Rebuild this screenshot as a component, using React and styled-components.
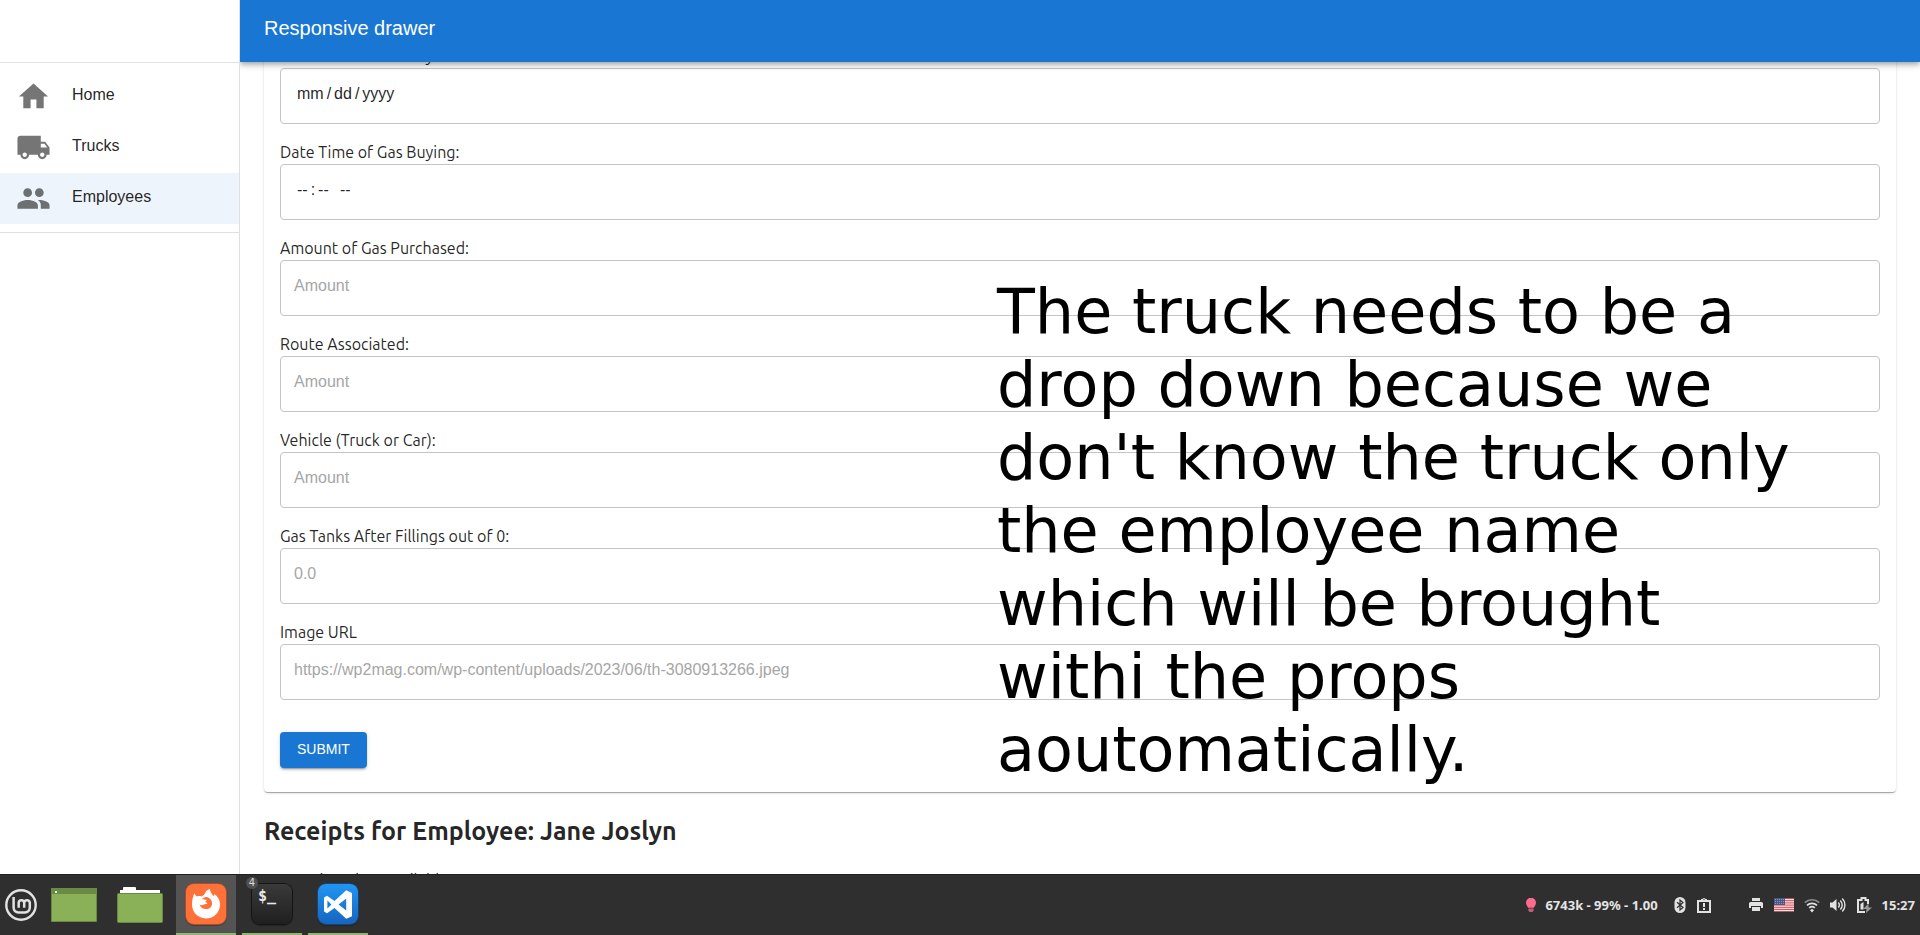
import React from "react";
import styled, { createGlobalStyle } from "styled-components";
import { MdHome, MdLocalShipping, MdPeople } from "react-icons/md";

const GlobalStyle = createGlobalStyle`
  *, *::before, *::after { box-sizing: border-box; }
  body {
    margin: 0;
    background: #fff;
    color: rgba(0, 0, 0, 0.87);
    font: 16px/24px "Liberation Sans", Arial, sans-serif;
  }
`;

const humanist = `"Ubuntu", "Open Sans", "Noto Sans", sans-serif`;

const Screen = styled.div`
  height: 100vh;
  display: grid;
  grid-template-rows: minmax(0, 1fr) 61px;
`;

const Page = styled.div`
  display: grid;
  grid-template-columns: 240px minmax(0, 1fr);
  min-height: 0;
  overflow: hidden;
`;

const Drawer = styled.nav`
  position: relative;
  z-index: 3;
  background: #fff;
  border-right: 1px solid #e0e0e0;
`;

const DrawerHeader = styled.div`
  height: 63px;
  border-bottom: 1px solid #e0e0e0;
`;

const NavList = styled.ul`
  list-style: none;
  margin: 0;
  padding: 8px 0;
  border-bottom: 1px solid #e0e0e0;
`;

const NavLink = styled.a`
  display: flex;
  align-items: center;
  gap: 21px;
  height: 51px;
  padding: 0 16px;
  color: inherit;
  text-decoration: none;
  background: ${(p) => (p.$selected ? "rgba(25, 118, 210, 0.08)" : "transparent")};

  svg { width: 35px; height: 35px; color: rgba(0, 0, 0, 0.54); }
  span { padding-bottom: 4px; }
`;

const Workspace = styled.div`
  position: relative;
  min-height: 0;
  overflow: hidden;
`;

const AppBar = styled.header`
  position: absolute;
  z-index: 2;
  top: 0;
  left: 0;
  right: 0;
  height: 62px;
  display: flex;
  align-items: center;
  padding: 0 24px 6px;
  color: #fff;
  background: #1976d2;
  box-shadow: 0 2px 4px -1px rgba(0, 0, 0, 0.2), 0 4px 5px 0 rgba(0, 0, 0, 0.14),
    0 1px 10px 0 rgba(0, 0, 0, 0.12);
`;

const AppTitle = styled.h1`
  margin: 0;
  font-size: 20px;
  font-weight: 400;
`;

const Main = styled.main`
  padding: 28px 24px 24px;
`;

const Card = styled.form`
  display: flex;
  flex-direction: column;
  align-items: stretch;
  gap: 16px;
  padding: 16px 16px 24px;
  border-radius: 4px;
  background: #fff;
  box-shadow: 0 2px 1px -1px rgba(0, 0, 0, 0.2), 0 1px 1px 0 rgba(0, 0, 0, 0.14),
    0 1px 3px 0 rgba(0, 0, 0, 0.12);
`;

const Field = styled.div`
  display: flex;
  flex-direction: column;
`;

const Label = styled.label`
  font-family: ${humanist};
`;

const TextInput = styled.input`
  width: 100%;
  height: 56px;
  padding: 0 13px 5px;
  border: 1px solid #c4c4c4;
  border-radius: 4px;
  background: transparent;
  color: rgba(0, 0, 0, 0.87);
  font: 16px "Liberation Sans", Arial, sans-serif;

  &::placeholder { color: #a6a6a6; opacity: 1; }
`;

const PickerInput = styled(TextInput)`
  padding-left: 15px;

  &::-webkit-datetime-edit-text { padding: 0 2px; }
  &::-webkit-datetime-edit-ampm-field { margin-left: 2px; }
  &::-webkit-calendar-picker-indicator { display: none; }
`;

const Submit = styled.button`
  align-self: flex-start;
  height: 36px;
  margin-top: 16px;
  padding: 0 17px 2px;
  border: 0;
  border-radius: 4px;
  color: #fff;
  background: #1976d2;
  font: 14px "Liberation Sans", Arial, sans-serif;
  text-transform: uppercase;
  box-shadow: 0 3px 1px -2px rgba(0, 0, 0, 0.2), 0 2px 2px 0 rgba(0, 0, 0, 0.14),
    0 1px 5px 0 rgba(0, 0, 0, 0.12);
`;

const SectionTitle = styled.h2`
  margin: 20px 0 18px;
  font: 700 25px/38px ${humanist};
`;

const EmptyText = styled.p`
  margin: 0;
  font-family: ${humanist};
`;

const Note = styled.p`
  position: absolute;
  z-index: 4;
  top: 275px;
  left: 997px;
  margin: 0;
  color: #000;
  font: 62px/73px "DejaVu Sans", Verdana, sans-serif;
  white-space: pre-line;
  pointer-events: none;
`;

const Taskbar = styled.footer`
  position: relative;
  z-index: 5;
  display: flex;
  align-items: stretch;
  gap: 6px;
  padding-right: 5px;
  border-top: 1px solid #1f1f1f;
  background: #2f2f2f;
  color: #e4e4e4;
`;

const TaskButton = styled.button`
  position: relative;
  display: flex;
  align-items: center;
  justify-content: center;
  width: ${(p) => (p.$menu ? 38 : 60)}px;
  padding: ${(p) => (p.$menu ? "0 0 0 4px" : "0")};
  border: 0;
  background: ${(p) => (p.$active ? "#545454" : "transparent")};
  box-shadow: ${(p) => (p.$running ? "inset 0 -2px #8fb56f" : "none")};
`;

const Tile = styled.span`
  display: block;
  width: 40px;
  height: 40px;
  margin-bottom: 2px;
  border-radius: 8px;
  background: ${(p) => p.$fill};
  box-shadow: 0 0 0 1px ${(p) => p.$edge}, 0 1px 1px 1px rgba(0, 0, 0, 0.25);

  svg { display: block; }
`;

const Prompt = styled.span`
  display: block;
  padding: 4px 0 0 6px;
  color: #e8e8e8;
  text-align: left;
  font: 700 15px/16px "DejaVu Sans Mono", monospace;
`;

const Badge = styled.span`
  position: absolute;
  top: 2px;
  left: 4px;
  width: 12px;
  height: 12px;
  border-radius: 50%;
  background: #505050;
  color: #dcdcdc;
  font: 10px/12px "DejaVu Sans", sans-serif;
`;

const Tray = styled.div`
  display: flex;
  align-items: center;
  gap: 36px;
  margin-left: auto;
  font: 700 13px/20px "Noto Sans", "Open Sans", sans-serif;
`;

const TrayGroup = styled.div`
  display: flex;
  align-items: center;
  gap: ${(p) => p.$gap}px;

  svg { display: block; }
`;

const NAV = [
  { name: "Home", Icon: MdHome },
  { name: "Trucks", Icon: MdLocalShipping },
  { name: "Employees", Icon: MdPeople, selected: true },
];

const FIELDS = [
  { id: "date", label: "Date Time of Gas Buy:", type: "date" },
  { id: "time", label: "Date Time of Gas Buying:", type: "time" },
  { id: "amount", label: "Amount of Gas Purchased:", placeholder: "Amount" },
  { id: "route", label: "Route Associated:", placeholder: "Amount" },
  { id: "vehicle", label: "Vehicle (Truck or Car):", placeholder: "Amount" },
  { id: "tanks", label: "Gas Tanks After Fillings out of 0:", placeholder: "0.0" },
  {
    id: "image",
    label: "Image URL",
    placeholder: "https://wp2mag.com/wp-content/uploads/2023/06/th-3080913266.jpeg",
  },
];

const NOTE = `The truck needs to be a
drop down because we
don't know the truck only
the employee name
which will be brought
withi the props
aoutomatically.`;

const MintIcon = () => (
  <svg width="32" height="32" viewBox="0 0 32 32" fill="none" stroke="#e2e2e2">
    <circle cx="16" cy="16" r="14.7" strokeWidth="2.4" />
    <path
      d="M8.6 8v10.6a4.8 4.8 0 0 0 4.8 4.8h6.6a4.8 4.8 0 0 0 4.8-4.8v-5.2a2.9 2.9 0 0 0-5.6 0v5.4M19.2 13.4a2.8 2.8 0 0 0-5.5 0v5.4"
      strokeWidth="2.5"
    />
  </svg>
);

const DesktopIcon = () => (
  <svg width="46" height="34" viewBox="0 0 46 34">
    <path fill="#8bb158" stroke="#6a8a3f" d="M.5.5h45v33H.5z" />
    <path fill="#6b8a43" d="M0 0h46v6H0z" />
    <path fill="#eee" d="M4 3h2v2H4z" />
  </svg>
);

const FolderIcon = () => (
  <svg width="46" height="38" viewBox="0 0 46 38">
    <path fill="#fff" d="M3 8V4h3V2q0-1 1-1h11q1 0 1 1v2h24v5H3z" />
    <rect x=".5" y="7.5" width="45" height="29" rx="1" fill="#8bb158" stroke="#6a8a3f" />
  </svg>
);

const FirefoxIcon = () => (
  <svg width="40" height="40" viewBox="0 0 40 40">
    <path
      fill="#fff"
      d="M8.4 9.2c.6 1.6 1.5 2.6 2.8 3.2 1.4-.4 2.8-.4 4.1 0 2-.6 3.2-1.8 4-3.6.7-1.6 2-2.9 4.6-3.7.3 3 1.7 4.4 3.5 7.2.7-.8.8-1.3.8-2.2 3.7 2.5 5.8 6.300 5.8 10.3 0 8-6.300 14-14 14s-14-6-14-13.600c0-4.700 1-8.800 2.400-11.600z"
    />
    <path
      fill="#ff7139"
      d="M16 15.200c1.700-2 3.700-2.500 5.500-2 2.700.8 4.600 3.200 4.600 6 0 3.500-2.600 5.900-6 5.900-3.100 0-5.600-1.700-6.500-4.600 1.500 1 3 .9 4.500.1 1.200-.7 2.400-.5 3.200-1.200-.3-1-1.100-1.100-2.600-1.200 1.200-.6 1.800-1.300 1.900-2.200-1.500-.7-3-1-4.600-.8z"
    />
  </svg>
);

const CodeIcon = () => (
  <svg width="40" height="40" viewBox="0 0 40 40">
    <path
      fill="#fff"
      fillRule="evenodd"
      d="M28.200 6.300 34 9v23.200l-5.800 2.600L16.500 24 9 29.200l-3-1.600V13.400l3-1.700 7.500 5.400zM9.400 16.400v8.200l4-4.100zM28.200 14.500l-7.600 6 7.600 6z"
    />
  </svg>
);

const BulbIcon = () => (
  <svg width="16" height="16" viewBox="0 0 16 16">
    <path fill="#ff6b8e" d="M8 .8a5 5 0 0 0-5 5c0 2 1.200 3 2.200 5h5.600c1-2 2.200-3 2.200-5a5 5 0 0 0-5-5z" />
    <path fill="#c45a76" d="M5.400 11.500h5.200v2.200L9.500 15h-3l-1.100-1.300z" />
  </svg>
);

const BluetoothIcon = () => (
  <svg width="16" height="16" viewBox="0 0 16 16">
    <rect x="2.500" width="11" height="16" rx="5.500" fill="#e2e2e2" />
    <path d="M5 5.200l6 5.300-3 2.500V3l3 2.500-6 5.300" fill="none" stroke="#2f2f2f" strokeWidth="1.200" />
  </svg>
);

const ClipboardIcon = () => (
  <svg width="16" height="16" viewBox="0 0 16 16" fill="none" stroke="#e2e2e2">
    <path strokeWidth="2" d="M2 4h12v11H2z" />
    <path fill="#e2e2e2" stroke="none" d="M5 4V2h1.500a1.600 1.600 0 0 1 3 0H11v2zM7 6h2v4H7zM7 11h2v2H7z" />
    <circle cx="8" cy="2.400" r=".7" fill="#2f2f2f" stroke="none" />
  </svg>
);

const PrinterIcon = () => (
  <svg width="16" height="16" viewBox="0 0 16 16" fill="#e2e2e2">
    <path d="M4 1h8v3H4zM2.500 5h11Q15 5 15 6.500V11h-2V9H3v2H1V6.500Q1 5 2.500 5zM4 10h8v4H4z" />
  </svg>
);

const FlagIcon = () => (
  <svg width="20" height="14" viewBox="0 0 20 14">
    <path fill="#f3e9e9" d="M0 0h20v14H0z" />
    <path stroke="#d0484f" strokeWidth="1" d="M0 .5h20M0 2.700h20M0 4.900h20M0 7.100h20M0 9.300h20M0 11.400h20M0 13.500h20" />
    <path fill="#4a5787" d="M0 0h11v7H0z" />
    <path stroke="#8d96b8" strokeDasharray="1 1" d="M1 1.500h9M1 3.500h9M1 5.500h9" />
  </svg>
);

const WifiIcon = () => (
  <svg width="16" height="16" viewBox="0 0 16 16" fill="none" strokeWidth="1.700">
    <path stroke="#8a8a8a" d="M.8 5.600a10.500 10.500 0 0 1 14.400 0" />
    <path stroke="#e2e2e2" d="M3 8.300a7.400 7.400 0 0 1 10 0M5.200 10.800a4.300 4.300 0 0 1 5.600 0" />
    <path fill="#e2e2e2" d="M8 11.800l2 1.500L8 15.500l-2-2.200z" />
  </svg>
);

const SoundIcon = () => (
  <svg width="16" height="16" viewBox="0 0 16 16" fill="none" stroke="#e2e2e2" strokeWidth="1.400">
    <path fill="#e2e2e2" stroke="none" d="M0 5.500h2.500L6.500 2v12L2.500 10.500H0z" />
    <path d="M8.300 5.500a3.500 3.500 0 0 1 0 5M10.300 3.400a6.500 6.500 0 0 1 0 9.200M12.300 1.500a9.300 9.300 0 0 1 0 13" />
  </svg>
);

const BatteryIcon = () => (
  <svg width="16" height="16" viewBox="0 0 16 16">
    <path fill="none" stroke="#e2e2e2" strokeWidth="2" d="M12 7V3H9.500V1h-4v2H2v12h7" />
    <path fill="#e2e2e2" d="M4.500 7l3-2v7.500h-3z" />
    <path fill="#999" d="M12.500 6.500 7 12h3.500l-.5 4 6-5.500h-3.500z" />
  </svg>
);

export default function App() {
  return (
    <Screen>
      <GlobalStyle />
      <Page>
        <Drawer>
          <DrawerHeader />
          <NavList>
            {NAV.map(({ name, Icon, selected }) => (
              <li key={name}>
                <NavLink href={`#${name.toLowerCase()}`} $selected={selected}>
                  <Icon />
                  <span>{name}</span>
                </NavLink>
              </li>
            ))}
          </NavList>
        </Drawer>
        <Workspace>
          <AppBar>
            <AppTitle>Responsive drawer</AppTitle>
          </AppBar>
          <Main>
            <Card onSubmit={(e) => e.preventDefault()}>
              {FIELDS.map(({ id, label, type = "text", placeholder }) => {
                const Input = type === "text" ? TextInput : PickerInput;
                return (
                  <Field key={id}>
                    <Label htmlFor={id}>{label}</Label>
                    <Input id={id} type={type} placeholder={placeholder} />
                  </Field>
                );
              })}
              <Submit type="submit">Submit</Submit>
            </Card>
            <SectionTitle>Receipts for Employee: Jane Joslyn</SectionTitle>
            <EmptyText>No receipts data available.</EmptyText>
          </Main>
        </Workspace>
      </Page>
      <Note>{NOTE}</Note>
      <Taskbar>
        <TaskButton $menu aria-label="Menu">
          <MintIcon />
        </TaskButton>
        <TaskButton aria-label="Show desktop">
          <DesktopIcon />
        </TaskButton>
        <TaskButton aria-label="Files">
          <FolderIcon />
        </TaskButton>
        <TaskButton $active $running aria-label="Firefox">
          <Tile $fill="#ff7139" $edge="#a3502f">
            <FirefoxIcon />
          </Tile>
        </TaskButton>
        <TaskButton $running aria-label="Terminal">
          <Tile $fill="linear-gradient(#3a3a3a, #1f1f1f)" $edge="#151515">
            <Prompt>$_</Prompt>
          </Tile>
          <Badge>4</Badge>
        </TaskButton>
        <TaskButton $running aria-label="Code editor">
          <Tile $fill="linear-gradient(#2196f3, #1565c0)" $edge="#1b4473">
            <CodeIcon />
          </Tile>
        </TaskButton>
        <Tray>
          <TrayGroup $gap={14}>
            <TrayGroup $gap={6}>
              <BulbIcon />
              <span>6743k - 99% - 1.00</span>
            </TrayGroup>
            <TrayGroup $gap={8}>
              <BluetoothIcon />
              <ClipboardIcon />
            </TrayGroup>
          </TrayGroup>
          <TrayGroup $gap={10}>
            <PrinterIcon />
            <FlagIcon />
            <WifiIcon />
            <SoundIcon />
            <BatteryIcon />
            <time>15:27</time>
          </TrayGroup>
        </Tray>
      </Taskbar>
    </Screen>
  );
}
